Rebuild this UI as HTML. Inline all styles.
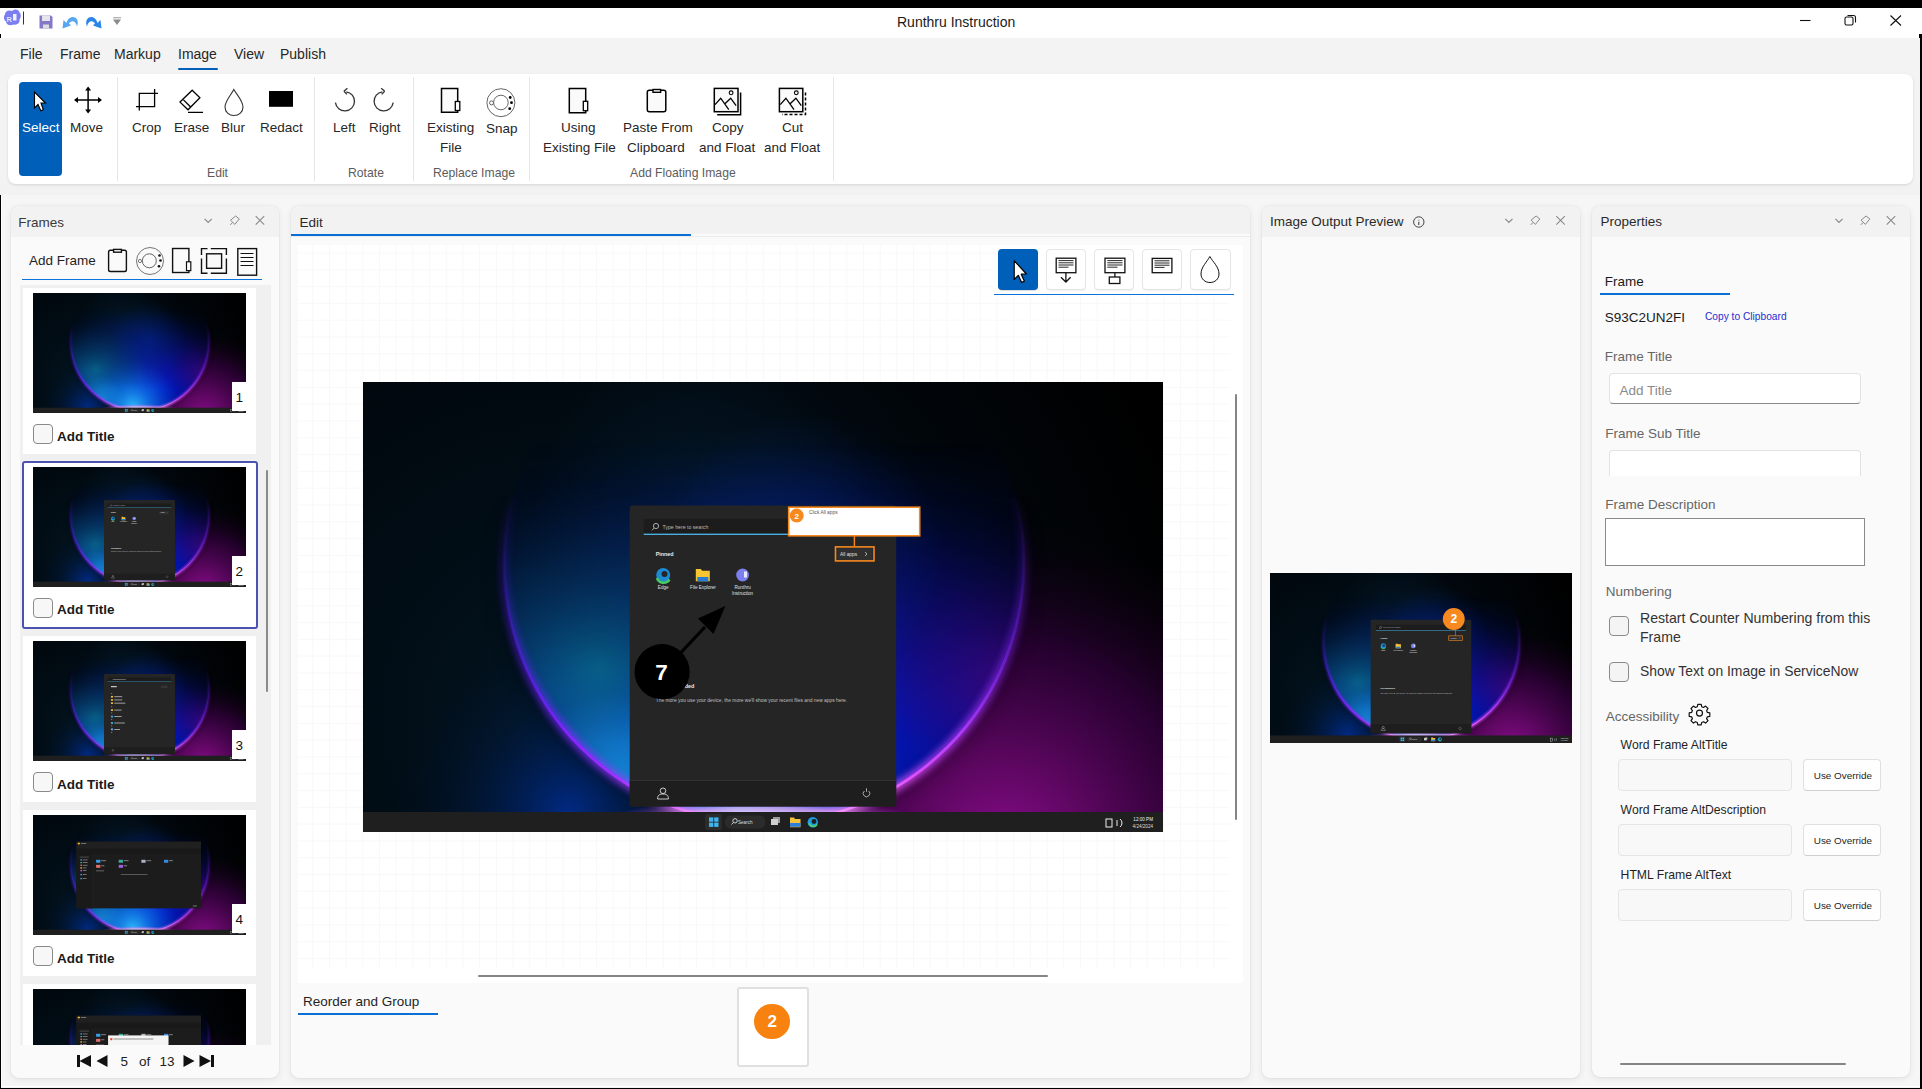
<!DOCTYPE html>
<html><head><meta charset="utf-8">
<style>
*{box-sizing:border-box;margin:0;padding:0}
html,body{width:1922px;height:1089px;overflow:hidden;background:#f3f3f3;font-family:"Liberation Sans",sans-serif;color:#1b1b1b;position:relative}
.a{position:absolute}
.t{position:absolute;white-space:nowrap;line-height:1}
svg{display:block}
.panel{position:absolute;background:#fafafa;border-radius:8px;box-shadow:0 0 1.5px rgba(0,0,0,.12),0 2px 7px rgba(0,0,0,.08);overflow:hidden}
.phead{position:absolute;left:0;top:0;right:0;height:31px;background:#f2f2f2}
.ic{position:absolute}
.lbl{position:absolute;font-size:13.5px;color:#242424;text-align:center;line-height:19px;white-space:nowrap}
.glbl{position:absolute;font-size:12.2px;color:#5c5c5c;white-space:nowrap;line-height:1}
.sep{position:absolute;top:77px;width:1px;height:104px;background:#e6e6e6}
</style></head><body>
<svg width="0" height="0" style="position:absolute;left:0;top:0"><defs>
<radialGradient id="gBase" gradientUnits="userSpaceOnUse" cx="200" cy="330" r="650">
 <stop offset="0" stop-color="#02141e"/><stop offset="0.35" stop-color="#010c14"/><stop offset="0.7" stop-color="#01060b"/><stop offset="1" stop-color="#000"/>
</radialGradient>
<radialGradient id="gMag" gradientUnits="userSpaceOnUse" cx="640" cy="470" r="330">
 <stop offset="0" stop-color="#8a0c8c"/><stop offset="0.3" stop-color="#5c0660" stop-opacity="0.95"/><stop offset="0.62" stop-color="#30003a" stop-opacity="0.8"/><stop offset="1" stop-color="#100010" stop-opacity="0"/>
</radialGradient>
<radialGradient id="gBL" gradientUnits="userSpaceOnUse" cx="205" cy="430" r="175">
 <stop offset="0" stop-color="#0034b0" stop-opacity="0.7"/><stop offset="0.6" stop-color="#002060" stop-opacity="0.25"/><stop offset="1" stop-color="#001040" stop-opacity="0"/>
</radialGradient>
<radialGradient id="gIn" gradientUnits="userSpaceOnUse" cx="400" cy="300" r="300">
 <stop offset="0" stop-color="#0a30d8"/><stop offset="0.35" stop-color="#0418c0"/><stop offset="0.7" stop-color="#020e90"/><stop offset="1" stop-color="#000840"/>
</radialGradient>
<radialGradient id="gCy" gradientUnits="userSpaceOnUse" cx="375" cy="430" r="175">
 <stop offset="0" stop-color="#30c8ff" stop-opacity="0.95"/><stop offset="0.45" stop-color="#1090f0" stop-opacity="0.55"/><stop offset="1" stop-color="#0060e0" stop-opacity="0"/>
</radialGradient>
<radialGradient id="gCy2" gradientUnits="userSpaceOnUse" cx="250" cy="400" r="90">
 <stop offset="0" stop-color="#20b8f0" stop-opacity="0.55"/><stop offset="1" stop-color="#20b0f0" stop-opacity="0"/>
</radialGradient>
<radialGradient id="gTeal" gradientUnits="userSpaceOnUse" cx="235" cy="285" r="190">
 <stop offset="0" stop-color="#0a88a8" stop-opacity="0.85"/><stop offset="0.55" stop-color="#0a6a90" stop-opacity="0.5"/><stop offset="1" stop-color="#0a6080" stop-opacity="0"/>
</radialGradient>
<radialGradient id="gTeal2" gradientUnits="userSpaceOnUse" cx="340" cy="130" r="170">
 <stop offset="0" stop-color="#0a4070" stop-opacity="0.25"/><stop offset="1" stop-color="#0a4070" stop-opacity="0"/>
</radialGradient>
<radialGradient id="gInd" gradientUnits="userSpaceOnUse" cx="640" cy="300" r="120">
 <stop offset="0" stop-color="#4a0890" stop-opacity="0.7"/><stop offset="1" stop-color="#300080" stop-opacity="0"/>
</radialGradient>
<radialGradient id="gTopB" gradientUnits="userSpaceOnUse" cx="440" cy="170" r="140">
 <stop offset="0" stop-color="#0838c8" stop-opacity="0.3"/><stop offset="1" stop-color="#0838c8" stop-opacity="0"/>
</radialGradient>
<radialGradient id="gBot" gradientUnits="userSpaceOnUse" cx="400" cy="436" r="150" gradientTransform="translate(400 436) scale(1 0.13) translate(-400 -436)">
 <stop offset="0" stop-color="#fff4ff" stop-opacity="1"/><stop offset="0.55" stop-color="#ffa0f0" stop-opacity="0.65"/><stop offset="1" stop-color="#c040ff" stop-opacity="0"/>
</radialGradient>
<linearGradient id="gInMask" gradientUnits="userSpaceOnUse" x1="0" y1="60" x2="0" y2="360">
 <stop offset="0" stop-color="#fff" stop-opacity="0"/><stop offset="0.45" stop-color="#fff" stop-opacity="0.45"/><stop offset="1" stop-color="#fff" stop-opacity="1"/>
</linearGradient>
<mask id="mIn" maskUnits="userSpaceOnUse" x="0" y="0" width="800" height="450"><rect width="800" height="450" fill="url(#gInMask)"/></mask>
<linearGradient id="gRim" gradientUnits="userSpaceOnUse" x1="140" y1="0" x2="662" y2="0">
 <stop offset="0" stop-color="#5818f8"/><stop offset="0.22" stop-color="#a030ff"/><stop offset="0.38" stop-color="#f090ff"/><stop offset="0.5" stop-color="#ffe0ff"/><stop offset="0.62" stop-color="#f8a0ff"/><stop offset="0.78" stop-color="#e050ff"/><stop offset="1" stop-color="#7020f0"/>
</linearGradient>
<linearGradient id="gRimMask" gradientUnits="userSpaceOnUse" x1="0" y1="110" x2="0" y2="350">
 <stop offset="0" stop-color="#fff" stop-opacity="0"/><stop offset="1" stop-color="#fff" stop-opacity="1"/>
</linearGradient>
<mask id="mRim" maskUnits="userSpaceOnUse" x="0" y="0" width="800" height="450"><rect width="800" height="450" fill="url(#gRimMask)"/></mask>
<clipPath id="cIn"><circle cx="401" cy="181" r="260"/></clipPath>
<filter id="fBlur" x="-20%" y="-20%" width="140%" height="140%"><feGaussianBlur stdDeviation="3.5"/></filter>
<filter id="fBlur2" x="-20%" y="-20%" width="140%" height="140%"><feGaussianBlur stdDeviation="0.7"/></filter>
<filter id="fBlur3" x="-20%" y="-20%" width="140%" height="140%"><feGaussianBlur stdDeviation="6"/></filter>
<symbol id="wall" viewBox="0 0 800 450" preserveAspectRatio="none">
 <rect width="800" height="450" fill="url(#gBase)"/>
 <rect width="800" height="450" fill="url(#gBL)"/>
 <rect width="800" height="450" fill="url(#gMag)"/>
 <rect width="800" height="450" fill="url(#gTeal2)"/>
 <g mask="url(#mRim)"><circle cx="401" cy="181" r="268" fill="none" stroke="#000" stroke-width="14" stroke-opacity="0.15" filter="url(#fBlur3)"/></g>
 <g mask="url(#mIn)"><g clip-path="url(#cIn)">
  <rect width="800" height="450" fill="url(#gIn)"/>
  <rect width="800" height="450" fill="url(#gTeal)"/>
  <rect width="800" height="450" fill="url(#gInd)"/>
  <rect width="800" height="450" fill="url(#gCy)"/>
  <rect width="800" height="450" fill="url(#gCy2)"/>
 </g></g>
 <g clip-path="url(#cIn)"><rect width="800" height="450" fill="url(#gTopB)"/></g>
 <g mask="url(#mRim)" fill="none">
  <circle cx="401" cy="181" r="260" stroke="url(#gRim)" stroke-width="9" filter="url(#fBlur)" opacity="0.75"/>
  <circle cx="401" cy="181" r="260" stroke="url(#gRim)" stroke-width="2.8" filter="url(#fBlur2)"/>
 </g>
 <rect y="400" width="800" height="40" fill="url(#gBot)"/>
 <rect y="430" width="800" height="20" fill="#1f1f1f"/>
</symbol>
</defs></svg>
<svg width="0" height="0" style="position:absolute;left:0;top:0"><defs>
<symbol id="taskicons" viewBox="0 0 800 450" preserveAspectRatio="none">
 <rect x="342" y="432" width="16.7" height="16" rx="2" fill="#2c2c2c"/>
 <rect x="346" y="435.4" width="4.3" height="4.3" fill="#3fb5f0"/><rect x="351.2" y="435.4" width="4.3" height="4.3" fill="#3fb5f0"/>
 <rect x="346" y="440.6" width="4.3" height="4.3" fill="#3fb5f0"/><rect x="351.2" y="440.6" width="4.3" height="4.3" fill="#3fb5f0"/>
 <rect x="361.7" y="433.4" width="40.8" height="13.4" rx="6.7" fill="#2b2b2b"/>
 <circle cx="372" cy="438.8" r="2.2" fill="none" stroke="#ddd" stroke-width="0.9"/>
 <path d="M370.5,440.4 L368.5,442.5" stroke="#ddd" stroke-width="0.9"/>
 <text x="375" y="441.5" font-family="Liberation Sans" font-size="4.6" fill="#ddd">Search</text>
 <rect x="410" y="435" width="7" height="6" fill="#9a9a9a"/><rect x="408" y="437" width="7" height="6" fill="#cfcfcf"/>
 <path d="M427,435.5 h4 l1,1.5 h5.5 v8.3 h-10.5 z" fill="#f6c33c"/><rect x="427" y="441" width="10.5" height="3.8" fill="#2e7fd9"/>
 <circle cx="449.8" cy="440.3" r="5.2" fill="#1f9be0"/><circle cx="451" cy="439.5" r="2.4" fill="#1f1f1f"/><path d="M446,441 a4.5,4.5 0 0 0 8,1.5" stroke="#49d46a" stroke-width="1.6" fill="none"/>
 <rect x="743" y="437" width="6" height="8" fill="none" stroke="#eee" stroke-width="1"/>
 <path d="M754,438 v6 M757,437 a5,5 0 0 1 0,8" stroke="#eee" stroke-width="1" fill="none"/>
 <text x="790" y="439" font-family="Liberation Sans" font-size="4.6" fill="#eee" text-anchor="end">12:00 PM</text>
 <text x="790" y="445.5" font-family="Liberation Sans" font-size="4.6" fill="#ddd" text-anchor="end">4/24/2024</text>
</symbol>
<symbol id="smenu" viewBox="0 0 800 450" preserveAspectRatio="none">
 <rect x="266.7" y="123.5" width="266.5" height="301" rx="3" fill="#252525"/>
 <rect x="266.7" y="398.3" width="266.5" height="26.2" fill="#1e1e1e"/>
 <rect x="266.7" y="398" width="266.5" height="0.8" fill="#353535"/>
 <rect x="280.7" y="136.7" width="238" height="16" rx="1.5" fill="#1c1c1c"/>
 <rect x="280.7" y="151.6" width="238" height="1.4" fill="#4aaee0"/>
 <circle cx="293" cy="144" r="2.6" fill="none" stroke="#bbb" stroke-width="0.9"/><path d="M291.2,146 L289,148.3" stroke="#bbb" stroke-width="0.9"/>
 <text x="299.5" y="146.5" font-family="Liberation Sans" font-size="5.2" fill="#b8b8b8">Type here to search</text>
 <text x="292.7" y="173.5" font-family="Liberation Sans" font-size="5.4" font-weight="bold" fill="#e8e8e8">Pinned</text>
 <rect x="473.5" y="166.3" width="36" height="12" rx="2" fill="#2f2f2f"/>
 <text x="477" y="174.2" font-family="Liberation Sans" font-size="4.8" fill="#e0e0e0">All apps</text><path d="M502,170 l2,2 l-2,2" stroke="#ccc" stroke-width="0.8" fill="none"/>
 <circle cx="300.2" cy="193" r="7" fill="#1b8bd6"/><path d="M294,196 a7,7 0 0 0 12.5,1.5" stroke="#48c860" stroke-width="2.6" fill="none"/><circle cx="301.5" cy="192" r="3" fill="#252525"/>
 <path d="M332.8,187 h5 l1.5,1.8 h7.5 v10.5 h-14 z" fill="#f7c531"/><rect x="334.3" y="195" width="11" height="4.4" fill="#2a7dd6"/>
 <circle cx="379.6" cy="193" r="6.4" fill="#7c80ee"/><rect x="381" y="189.5" width="3" height="6" fill="#e8e8ff"/>
 <text x="300.2" y="206.5" font-family="Liberation Sans" font-size="4.6" fill="#e0e0e0" text-anchor="middle">Edge</text>
 <text x="340" y="206.5" font-family="Liberation Sans" font-size="4.6" fill="#e0e0e0" text-anchor="middle">File Explorer</text>
 <text x="379.6" y="206.5" font-family="Liberation Sans" font-size="4.6" fill="#e0e0e0" text-anchor="middle">Runthru</text><text x="379.6" y="213" font-family="Liberation Sans" font-size="4.6" fill="#e0e0e0" text-anchor="middle">Instruction</text>
 <text x="292.7" y="306" font-family="Liberation Sans" font-size="5.4" font-weight="bold" fill="#e8e8e8">Recommended</text>
 <text x="292.7" y="320" font-family="Liberation Sans" font-size="4.9" fill="#c0c0c0">The more you use your device, the more we'll show your recent files and new apps here.</text>
 <circle cx="300" cy="408.8" r="2.8" fill="none" stroke="#ddd" stroke-width="0.9"/><path d="M294.6,417 c0,-4 2,-5 5.4,-5 c3.4,0 5.4,1 5.4,5 z" fill="none" stroke="#ddd" stroke-width="0.9"/>
 <path d="M501.3,409 a3.3,3.3 0 1 0 4.4,0 M503.5,406.3 v3.5" fill="none" stroke="#ccc" stroke-width="0.8"/>
</symbol>
<symbol id="smenu2" viewBox="0 0 800 450" preserveAspectRatio="none">
 <rect x="266.7" y="123.5" width="266.5" height="301" rx="3" fill="#252525"/>
 <rect x="266.7" y="398.3" width="266.5" height="26.2" fill="#1e1e1e"/>
 <rect x="280.7" y="136.7" width="238" height="16" rx="1.5" fill="#1c1c1c"/>
 <rect x="280.7" y="151.6" width="238" height="1.4" fill="#4aaee0"/>
 <rect x="299.5" y="143" width="49" height="2.6" fill="#8a8a8a"/>
 <rect x="292.7" y="169.2" width="22" height="4" fill="#dedede"/>
 <rect x="480" y="167" width="26" height="10" rx="2" fill="#333"/>
 <rect x="292.7" y="195" width="5" height="3" fill="#888"/>
 <rect x="292.7" y="206" width="8" height="6" fill="#f5c031"/><rect x="305" y="207.5" width="30" height="3" fill="#bbb"/>
 <rect x="292.7" y="218" width="8" height="6" fill="#f5c031"/><rect x="305" y="219.5" width="30" height="3" fill="#bbb"/>
 <rect x="292.7" y="230" width="8" height="6" fill="#f5c031"/><rect x="305" y="231.5" width="42" height="3" fill="#bbb"/>
 <rect x="292.7" y="245" width="5" height="3" fill="#888"/>
 <rect x="292.7" y="256" width="8" height="6" fill="#f5c031"/><rect x="305" y="257.5" width="28" height="3" fill="#bbb"/>
 <rect x="292.7" y="268" width="5" height="3" fill="#888"/>
 <rect x="292.7" y="280" width="8" height="7" fill="#3aa0e8"/><rect x="305" y="282" width="28" height="3" fill="#bbb"/>
 <rect x="292.7" y="293" width="5" height="3" fill="#888"/>
 <rect x="292.7" y="304" width="8" height="7" fill="#34b0d0"/><rect x="305" y="306" width="40" height="3" fill="#bbb"/>
 <rect x="292.7" y="317" width="5" height="3" fill="#888"/>
 <rect x="292.7" y="328" width="8" height="7" fill="#6aa8e8"/><rect x="305" y="330" width="22" height="3" fill="#bbb"/>
 <rect x="292.7" y="342" width="5" height="3" fill="#888"/>
 <circle cx="300" cy="410" r="3" fill="none" stroke="#ccc" stroke-width="0.9"/>
</symbol>
<symbol id="explorer" viewBox="0 0 800 450" preserveAspectRatio="none">
 <rect x="163" y="100" width="468" height="250" fill="#1c1c1c"/>
 <rect x="163" y="100" width="468" height="26" fill="#202020"/>
 <rect x="163" y="126" width="468" height="20" fill="#191919"/>
 <rect x="168" y="104" width="8" height="6" fill="#f5c031"/><rect x="180" y="105" width="20" height="3" fill="#888"/>
 <rect x="163" y="146" width="60" height="204" fill="#1a1a1a"/>
 <rect x="223" y="146" width="1" height="204" fill="#2c2c2c"/>
 <rect x="175" y="155" width="35" height="6" fill="#3a3a3a"/>
 <rect x="178" y="166" width="6" height="5" fill="#3aa0e8"/><rect x="187" y="167" width="18" height="3" fill="#888"/>
 <rect x="178" y="176" width="6" height="5" fill="#34b0a0"/><rect x="187" y="177" width="18" height="3" fill="#888"/>
 <rect x="178" y="186" width="6" height="5" fill="#e07060"/><rect x="187" y="187" width="18" height="3" fill="#888"/>
 <rect x="178" y="196" width="6" height="5" fill="#f5c031"/><rect x="187" y="197" width="14" height="3" fill="#888"/>
 <rect x="178" y="206" width="6" height="5" fill="#c060e0"/><rect x="187" y="207" width="14" height="3" fill="#888"/>
 <rect x="178" y="221" width="6" height="5" fill="#3aa0e8"/><rect x="187" y="222" width="14" height="3" fill="#888"/>
 <rect x="178" y="236" width="6" height="5" fill="#3aa0e8"/><rect x="187" y="237" width="14" height="3" fill="#888"/>
 <rect x="237" y="168" width="16" height="11" fill="#3aa0e8"/><rect x="256" y="170" width="18" height="3" fill="#999"/>
 <rect x="322" y="168" width="16" height="11" fill="#34b0a0"/><rect x="341" y="170" width="18" height="3" fill="#999"/>
 <rect x="407" y="168" width="16" height="11" fill="#aab4c8"/><rect x="426" y="170" width="18" height="3" fill="#999"/>
 <rect x="492" y="168" width="16" height="11" fill="#3a8ae0"/><rect x="511" y="170" width="14" height="3" fill="#999"/>
 <rect x="237" y="187" width="16" height="11" fill="#e07070"/><rect x="256" y="189" width="12" height="3" fill="#999"/>
 <rect x="322" y="187" width="16" height="11" fill="#a060e0"/><rect x="341" y="189" width="12" height="3" fill="#999"/>
 <rect x="237" y="208" width="30" height="3" fill="#777"/>
 <rect x="330" y="222" width="100" height="2.5" fill="#777"/>
 <rect x="600" y="338" width="16" height="6" fill="#555"/>
</symbol>
</defs></svg>




<div class="a" style="left:0;top:8px;width:1922px;height:30px;background:#fff"></div>
<!-- quick access + window controls -->
<svg class="a" style="left:0;top:8px" width="130" height="30" viewBox="0 8 130 30">
<path d="M5,14.5 C5,11 9,9.5 12,11 C14,8.5 19,9 19.5,12.5 C21.5,14 21,18 19.5,19.5 C20,23 17,25.5 13.5,24.5 C10.5,26 6,25 6,21.5 C3.5,20 3.5,16 5,14.5 Z" fill="#7a7ef0"/>
<text x="6.5" y="21.5" font-family="Liberation Sans" font-size="7.5" font-weight="bold" fill="#dfe2ff">R</text>
<rect x="13" y="14" width="3.5" height="6.5" fill="#f0f0ff"/>
<rect x="23" y="11.5" width="1" height="13" fill="#333"/>
<path d="M39.5,15.5 H51 L52.5,17 V28.5 H39.5 Z" fill="#8478c8"/>
<rect x="42" y="15.5" width="8" height="5.5" fill="#e6e6ea"/>
<rect x="43" y="24.5" width="6" height="4" fill="#ddd"/>
<path d="M66.5,23 C68,17 74,15 77,19.5 C78.5,22 77.5,25 77,26.5 C76,21.5 72,19.5 69,23.5 L71,25.5 L62.5,28.5 L63.5,20 Z" fill="#55a8f0"/>
<path d="M97.5,23 C96,17 90,15 87,19.5 C85.5,22 86.5,25 87,26.5 C88,21.5 92,19.5 95,23.5 L93,25.5 L101.5,28.5 L100.5,20 Z" fill="#2a86e6"/>
<path d="M113,17.8 H121" stroke="#999" stroke-width="1"/>
<path d="M113,19.5 L117,25 L121,19.5 Z" fill="#8a8a8a"/>
</svg>
<svg class="a" style="left:1790px;top:8px" width="120" height="30" viewBox="1790 8 120 30">
<path d="M1800,20.5 H1810.5" stroke="#111" stroke-width="1.1"/>
<rect x="1845" y="17" width="8" height="8" rx="1.5" fill="none" stroke="#111" stroke-width="1.1"/>
<path d="M1847.5,15.5 H1853.5 C1854.8,15.5 1855.5,16.2 1855.5,17.5 V22.5" fill="none" stroke="#111" stroke-width="1.1"/>
<path d="M1890.5,15.5 L1901,25.5 M1901,15.5 L1890.5,25.5" stroke="#111" stroke-width="1.1"/>
</svg>

<!-- title -->
<div class="t" style="left:897px;top:15px;font-size:14px;color:#1a1a1a">Runthru Instruction</div>

<!-- menu -->
<div class="t" style="left:20px;top:47px;font-size:14px;color:#262626">File</div>
<div class="t" style="left:60px;top:47px;font-size:14px;color:#262626">Frame</div>
<div class="t" style="left:114px;top:47px;font-size:14px;color:#262626">Markup</div>
<div class="t" style="left:178px;top:47px;font-size:14px;color:#262626">Image</div>
<div class="t" style="left:234px;top:47px;font-size:14px;color:#262626">View</div>
<div class="t" style="left:280px;top:47px;font-size:14px;color:#262626">Publish</div>
<div class="a" style="left:178px;top:68px;width:40px;height:2px;border-radius:1px;background:#005fb8"></div>


<div class="a" style="left:0;top:184px;width:1920px;height:11px;background:#f2f2f2"></div><div class="a" style="left:1px;top:195px;width:1919px;height:892px;background:#f6f6f6"></div><div class="a" style="left:1px;top:195px;width:1px;height:892px;background:#fff"></div>
<div class="a" style="left:1px;top:1086px;width:1919px;height:1px;background:#fff"></div>
<div class="panel" style="left:11px;top:205.5px;width:268px;height:872px"><div class="phead"></div></div>
<div class="t" style="left:18.2px;top:215.5px;font-size:13.5px;color:#3a3a3a">Frames</div>
<div class="t" style="left:29px;top:253.5px;font-size:13.5px;color:#1f1f1f">Add Frame</div>
<div class="a" style="left:22px;top:278.5px;width:240px;height:1.5px;background:#0a74da"></div>
<div class="a" style="left:20px;top:284.5px;width:251px;height:760px;background:#f0f0f0;overflow:hidden"><div class="a" style="left:3px;top:3.5px;width:233px;height:165.5px;background:#fff"></div><svg class="a" style="left:13px;top:8.5px" width="213" height="120" viewBox="0 0 800 450" preserveAspectRatio="none"><use href="#wall"/><use href="#taskicons"/></svg><div class="a" style="left:212px;top:97.5px;width:14px;height:29px;background:#fff"></div><div class="t" style="left:215.5px;top:106.30000000000001px;font-size:13.5px;color:#111">1</div><div class="a" style="left:13px;top:139.5px;width:20px;height:20px;border:1px solid #8a8a8a;border-radius:4px;background:#f7f7f7"></div><div class="t" style="left:37px;top:145.0px;font-size:13.5px;font-weight:bold;color:#1a1a1a">Add Title</div><div class="a" style="left:1.5px;top:176.0px;width:236px;height:168.5px;background:#fff;border:2px solid #4b52b0;border-radius:3px"></div><svg class="a" style="left:13px;top:182.2px" width="213" height="120" viewBox="0 0 800 450" preserveAspectRatio="none"><use href="#wall"/><use href="#taskicons"/><use href="#smenu"/></svg><div class="a" style="left:212px;top:271.20000000000005px;width:14px;height:29px;background:#fff"></div><div class="t" style="left:215.5px;top:280.0px;font-size:13.5px;color:#111">2</div><div class="a" style="left:13px;top:313.20000000000005px;width:20px;height:20px;border:1px solid #8a8a8a;border-radius:4px;background:#f7f7f7"></div><div class="t" style="left:37px;top:318.70000000000005px;font-size:13.5px;font-weight:bold;color:#1a1a1a">Add Title</div><div class="a" style="left:3px;top:351.5px;width:233px;height:165.5px;background:#fff"></div><svg class="a" style="left:13px;top:356.5px" width="213" height="120" viewBox="0 0 800 450" preserveAspectRatio="none"><use href="#wall"/><use href="#taskicons"/><use href="#smenu2"/></svg><div class="a" style="left:212px;top:445.5px;width:14px;height:29px;background:#fff"></div><div class="t" style="left:215.5px;top:454.29999999999995px;font-size:13.5px;color:#111">3</div><div class="a" style="left:13px;top:487.5px;width:20px;height:20px;border:1px solid #8a8a8a;border-radius:4px;background:#f7f7f7"></div><div class="t" style="left:37px;top:493.0px;font-size:13.5px;font-weight:bold;color:#1a1a1a">Add Title</div><div class="a" style="left:3px;top:525.5px;width:233px;height:165.5px;background:#fff"></div><svg class="a" style="left:13px;top:530.5px" width="213" height="120" viewBox="0 0 800 450" preserveAspectRatio="none"><use href="#wall"/><use href="#taskicons"/><use href="#explorer"/></svg><div class="a" style="left:212px;top:619.5px;width:14px;height:29px;background:#fff"></div><div class="t" style="left:215.5px;top:628.3px;font-size:13.5px;color:#111">4</div><div class="a" style="left:13px;top:661.5px;width:20px;height:20px;border:1px solid #8a8a8a;border-radius:4px;background:#f7f7f7"></div><div class="t" style="left:37px;top:667.0px;font-size:13.5px;font-weight:bold;color:#1a1a1a">Add Title</div><div class="a" style="left:3px;top:699.5px;width:233px;height:165.5px;background:#fff"></div><svg class="a" style="left:13px;top:704.5px" width="213" height="120" viewBox="0 0 800 450" preserveAspectRatio="none"><use href="#wall"/><use href="#taskicons"/><use href="#explorer"/><rect x="282" y="174" width="227" height="80" fill="#f4f4f4"/><rect x="290" y="184" width="8" height="8" fill="#e05020"/><rect x="302" y="186" width="150" height="3" fill="#777"/></svg><div class="a" style="left:212px;top:793.5px;width:14px;height:29px;background:#fff"></div><div class="t" style="left:215.5px;top:802.3px;font-size:13.5px;color:#111">5</div><div class="a" style="left:13px;top:835.5px;width:20px;height:20px;border:1px solid #8a8a8a;border-radius:4px;background:#f7f7f7"></div><div class="t" style="left:37px;top:841.0px;font-size:13.5px;font-weight:bold;color:#1a1a1a">Add Title</div></div>
<div class="a" style="left:265.5px;top:470px;width:2.5px;height:222px;background:#8a8a8a;border-radius:1px"></div>
<svg class="a" style="left:70px;top:1050px" width="150" height="22" viewBox="70 1050 150 22">
<rect x="77" y="1055" width="3" height="12" fill="#111"/><path d="M91,1055 L79.5,1061 L91,1067 Z" fill="#111"/>
<path d="M107.5,1055 L96.5,1061 L107.5,1067 Z" fill="#111"/>
<path d="M183.5,1055 L194.5,1061 L183.5,1067 Z" fill="#111"/>
<path d="M199.5,1055 L211,1061 L199.5,1067 Z" fill="#111"/><rect x="211" y="1055" width="3" height="12" fill="#111"/>
</svg>
<div class="t" style="left:120.5px;top:1055px;font-size:13.5px;color:#222">5</div>
<div class="t" style="left:139px;top:1055px;font-size:13.5px;color:#222">of</div>
<div class="t" style="left:159.5px;top:1055px;font-size:13.5px;color:#222">13</div>
<svg class="a" style="left:0;top:0;overflow:visible" width="1" height="1">
<path d="M204.60000000000002,218.9 l3.6,3.6 l3.6,-3.6" fill="none" stroke="#8a8a8a" stroke-width="1.2"/>
<path d="M230.5,220.2 L235.6,216.0 L239.4,219.0 L238.4,220.0 L234.9,224.4 Z M232.5,222.5 L230.3,224.9" fill="none" stroke="#8a8a8a" stroke-width="1" stroke-linejoin="round"/>
<path d="M255.7,216.2 l8.5,8.5 M264.2,216.2 l-8.5,8.5" fill="none" stroke="#8a8a8a" stroke-width="1.1"/>
</svg>
<svg class="a" style="left:100px;top:240px" width="165" height="40" viewBox="100 240 165 40">
<g fill="none" stroke="#111" stroke-width="1.4">
<rect x="108.6" y="250.3" width="17.8" height="21.2" rx="1.8"/>
<rect x="113.6" y="249.4" width="7.8" height="2.8" fill="#fff"/>
<circle cx="150" cy="261" r="13.5" stroke="#666" stroke-width="0.9"/>
<circle cx="149.3" cy="260.8" r="7" stroke="#555" stroke-width="0.9"/>
<circle cx="140" cy="261" r="1.6" stroke="#555" stroke-width="0.8" fill="#fff"/>
<rect x="172.6" y="248.5" width="16.3" height="24" />
<rect x="186.5" y="261.8" width="4.3" height="8.8" fill="#fff" stroke-width="1.2"/>
<path d="M201.5,255 V248.6 H207.5 M210.8,248.6 H226.4 V255 M226.4,258.5 V273.2 H210.8 M207.5,273.2 H201.5 V258.5"/>
<rect x="206.6" y="253.8" width="15" height="14.5"/>
<rect x="237.8" y="248.6" width="18.8" height="26.6"/>
<path d="M240.5,253.5 H253.5 M240.5,257.5 H253.5 M240.5,261.5 H253.5 M240.5,265.5 H253.5" stroke-width="1.2"/>
</g>
<circle cx="159.5" cy="255.5" r="1.3" fill="#111"/><circle cx="160.5" cy="260.5" r="1.3" fill="#111"/><circle cx="159" cy="266.2" r="1.3" fill="#111"/>
</svg>
<div class="panel" style="left:291px;top:206px;width:959px;height:871.5px"><div class="phead" style="height:28px"></div></div>
<div class="t" style="left:299.5px;top:215.5px;font-size:13.5px;color:#2a2a2a">Edit</div>
<div class="a" style="left:291px;top:234px;width:400px;height:2px;background:#0a6fd6"></div>
<div class="a" style="left:291px;top:236px;width:959px;height:1px;background:#ececec"></div>
<div class="a" style="left:298px;top:244.8px;width:931.5px;height:723.2px;background-color:#fff;background-image:linear-gradient(to right,#f8f8f8 1px,transparent 1px),linear-gradient(to bottom,#f8f8f8 1px,transparent 1px);background-size:16.7px 16.8px;background-position:14.3px 7.5px"></div>
<div class="a" style="left:1229.5px;top:244.8px;width:13.5px;height:738px;background:#fff"></div>
<div class="a" style="left:298px;top:968px;width:945px;height:15px;background:#fff"></div>
<div class="a" style="left:1234.8px;top:394px;width:2.4px;height:426px;background:#858585;border-radius:1px"></div>
<div class="a" style="left:477.8px;top:974.5px;width:570px;height:2.2px;background:#858585;border-radius:1px"></div>
<div class="a" style="left:994px;top:244.8px;width:249px;height:49px;background:#fff"></div>
<div class="a" style="left:993.8px;top:293.7px;width:240.4px;height:1.3px;background:#0a74da"></div>
<div class="a" style="left:998.2px;top:249px;width:39.6px;height:40.7px;background:#005fb8;border-radius:4px;box-shadow:0 1px 1px rgba(0,0,0,.15)"></div>
<div class="a" style="left:1045.6px;top:249px;width:40.8px;height:40.7px;background:#fff;border:1px solid #e6e6e6;border-radius:4px;box-shadow:0 1px 1px rgba(0,0,0,.06)"></div>
<div class="a" style="left:1093.6px;top:249px;width:40.8px;height:40.7px;background:#fff;border:1px solid #e6e6e6;border-radius:4px;box-shadow:0 1px 1px rgba(0,0,0,.06)"></div>
<div class="a" style="left:1141.7px;top:249px;width:40.8px;height:40.7px;background:#fff;border:1px solid #e6e6e6;border-radius:4px;box-shadow:0 1px 1px rgba(0,0,0,.06)"></div>
<div class="a" style="left:1189.8px;top:249px;width:40.8px;height:40.7px;background:#fff;border:1px solid #e6e6e6;border-radius:4px;box-shadow:0 1px 1px rgba(0,0,0,.06)"></div>
<svg class="a" style="left:990px;top:245px" width="250" height="45" viewBox="990 245 250 45">
<path d="M1014.2,260.6 L1014.2,279.5 L1018.3,275.3 L1021.6,282.4 L1024.4,281.2 L1021.2,274.2 L1026.4,274 Z" fill="#fff" stroke="#000" stroke-width="1.2" stroke-linejoin="round"/>
<g fill="none" stroke="#111" stroke-width="1.3">
<rect x="1056.2" y="258.2" width="19.7" height="14.5"/>
<path d="M1058.5,260.6 H1073.5 M1058.5,262.8 H1073.5 M1058.5,265 H1073.5 M1058.5,267.2 H1068.5" stroke-width="0.9"/>
<path d="M1065.9,272.7 V281.5 M1061,277.3 L1065.9,282 L1070.6,277.3"/>
<rect x="1105" y="258.2" width="19.9" height="14.5"/>
<path d="M1107.3,260.6 H1122.5 M1107.3,262.8 H1122.5 M1107.3,265 H1122.5 M1107.3,267.2 H1117.5" stroke-width="0.9"/>
<path d="M1114.9,272.7 V277"/>
<rect x="1109.3" y="277" width="10.6" height="6.5"/>
<rect x="1152.2" y="258.4" width="19.7" height="14.3"/>
<path d="M1154.5,260.8 H1169.5 M1154.5,263 H1169.5 M1154.5,265.2 H1169.5 M1154.5,267.4 H1164.5" stroke-width="0.9"/>
<path d="M1209.8,256.5 C1207,262 1201,267 1201,274 C1201,279 1205,282.5 1210,282.5 C1215,282.5 1219,279 1219,274 C1219,267 1213,262 1209.8,256.5 Z" stroke-width="1"/>
</g></svg>
<svg class="a" style="left:363px;top:382px" width="800" height="450" viewBox="0 0 800 450" preserveAspectRatio="none"><use href="#wall"/><use href="#taskicons"/><use href="#smenu"/><rect x="425.7" y="125.2" width="131" height="28.6" fill="#fff" stroke="#f7891f" stroke-width="1.6"/><circle cx="433.7" cy="133.6" r="7" fill="#f7891f"/><text x="433.7" y="136.5" font-family="Liberation Sans" font-size="8" font-weight="bold" fill="#fff" text-anchor="middle">2</text><text x="446" y="131.5" font-family="Liberation Sans" font-size="4.8" fill="#555">Click All apps</text><path d="M491.4,153.6 V164.4" stroke="#f7891f" stroke-width="1.4"/><rect x="472.5" y="164.9" width="38.5" height="14" fill="none" stroke="#f7891f" stroke-width="1.6"/><path d="M318,270.5 L342,245" stroke="#000" stroke-width="3.2"/><path d="M362.4,224 L335,236.5 L350.5,252 Z" fill="#000"/><circle cx="299.1" cy="289.7" r="27.6" fill="#000"/><text x="298.5" y="297.8" font-family="Liberation Sans" font-size="22.5" font-weight="bold" fill="#fff" text-anchor="middle">7</text></svg>
<div class="t" style="left:303px;top:994.5px;font-size:13.5px;color:#1f1f1f">Reorder and Group</div>
<div class="a" style="left:297.8px;top:1012.8px;width:140.2px;height:2px;background:#0a6fd6"></div>
<div class="a" style="left:736.5px;top:987.3px;width:72.2px;height:80px;background:#fff;border:2.6px solid #e0e0e0;border-radius:3px"></div>
<div class="a" style="left:754.2px;top:1003.6px;width:35.6px;height:35.6px;border-radius:50%;background:#f7820f"></div>
<div class="t" style="left:767.6px;top:1012.7px;font-size:17px;font-weight:bold;color:#fff">2</div>
<div class="panel" style="left:1262px;top:206px;width:318px;height:871.5px"><div class="phead"></div></div>
<div class="t" style="left:1270px;top:215px;font-size:13.5px;color:#2a2a2a">Image Output Preview</div>
<svg class="a" style="left:1410px;top:214px" width="18" height="18" viewBox="1410 214 18 18"><circle cx="1418.8" cy="222" r="5.2" fill="none" stroke="#444" stroke-width="1"/><path d="M1418.8,219.7 V220.6 M1418.8,221.7 V225" stroke="#444" stroke-width="1.1"/></svg>
<svg class="a" style="left:0;top:0;overflow:visible" width="1" height="1">
<path d="M1505.3,218.9 l3.6,3.6 l3.6,-3.6" fill="none" stroke="#8a8a8a" stroke-width="1.2"/>
<path d="M1531,220.2 L1536.1,216.0 L1539.9,219.0 L1538.9,220.0 L1535.4,224.4 Z M1533,222.5 L1530.8,224.9" fill="none" stroke="#8a8a8a" stroke-width="1" stroke-linejoin="round"/>
<path d="M1556.3,216.2 l8.5,8.5 M1564.8,216.2 l-8.5,8.5" fill="none" stroke="#8a8a8a" stroke-width="1.1"/>
</svg>
<svg class="a" style="left:1270px;top:573px" width="302" height="170" viewBox="0 0 800 450" preserveAspectRatio="none"><use href="#wall"/><use href="#taskicons"/><use href="#smenu"/><rect x="473.5" y="166.3" width="36" height="12" fill="none" stroke="#f7891f" stroke-width="1.6"/><path d="M491.4,150 V166" stroke="#f7891f" stroke-width="1.4"/><circle cx="486.8" cy="121.9" r="29" fill="#f7891f"/><text x="486.8" y="133.5" font-family="Liberation Sans" font-size="32" font-weight="bold" fill="#fff" text-anchor="middle">2</text></svg>
<div class="panel" style="left:1592px;top:205.5px;width:318px;height:871px"><div class="phead"></div></div>
<div class="t" style="left:1600.5px;top:215px;font-size:13.5px;color:#2a2a2a">Properties</div>
<svg class="a" style="left:0;top:0;overflow:visible" width="1" height="1">
<path d="M1835.3999999999999,218.9 l3.6,3.6 l3.6,-3.6" fill="none" stroke="#8a8a8a" stroke-width="1.2"/>
<path d="M1861,220.2 L1866.1,216.0 L1869.9,219.0 L1868.9,220.0 L1865.4,224.4 Z M1863,222.5 L1860.8,224.9" fill="none" stroke="#8a8a8a" stroke-width="1" stroke-linejoin="round"/>
<path d="M1886.7,216.2 l8.5,8.5 M1895.2,216.2 l-8.5,8.5" fill="none" stroke="#8a8a8a" stroke-width="1.1"/>
</svg>
<div class="t" style="left:1604.8px;top:275px;font-size:13.5px;color:#1a1a1a">Frame</div>
<div class="a" style="left:1599.7px;top:292.5px;width:130px;height:2px;background:#0a6fd6"></div>
<div class="t" style="left:1604.8px;top:310.5px;font-size:13.5px;color:#1a1a1a">S93C2UN2FI</div>
<div class="t" style="left:1705px;top:312px;font-size:10.2px;color:#1f2fd0">Copy to Clipboard</div>
<div class="t" style="left:1604.8px;top:350px;font-size:13.5px;color:#666">Frame Title</div>
<div class="a" style="left:1608.6px;top:372.7px;width:252.8px;height:31.6px;background:#fff;border:1px solid #e3e3e3;border-bottom:1px solid #8a8a8a;border-radius:4px"></div>
<div class="t" style="left:1619.5px;top:383.5px;font-size:13.5px;color:#8a8a8a">Add Title</div>
<div class="t" style="left:1605.3px;top:427px;font-size:13.5px;color:#666">Frame Sub Title</div>
<div class="a" style="left:1608.6px;top:450.4px;width:252.8px;height:25.3px;background:#fff;border:1px solid #e3e3e3;border-bottom:none;border-radius:4px 4px 0 0"></div>
<div class="t" style="left:1605.3px;top:498px;font-size:13.5px;color:#666">Frame Description</div>
<div class="a" style="left:1605.3px;top:518.4px;width:259.7px;height:47.2px;background:#fff;border:1px solid #8a8a8a"></div>
<div class="t" style="left:1605.7px;top:585px;font-size:13.5px;color:#666">Numbering</div>
<div class="a" style="left:1609.4px;top:616.4px;width:19.6px;height:19.6px;background:#f4f4f4;border:1px solid #8a8a8a;border-radius:4px"></div>
<div class="t" style="left:1640px;top:610.8px;font-size:14.1px;color:#333">Restart Counter Numbering from this</div>
<div class="t" style="left:1640px;top:629.8px;font-size:14.1px;color:#333">Frame</div>
<div class="a" style="left:1609.4px;top:662.4px;width:19.6px;height:19.6px;background:#f4f4f4;border:1px solid #8a8a8a;border-radius:4px"></div>
<div class="t" style="left:1640px;top:665px;font-size:13.9px;color:#333">Show Text on Image in ServiceNow</div>
<div class="t" style="left:1605.7px;top:710px;font-size:13.5px;color:#666">Accessibility</div>
<svg class="a" style="left:1686px;top:700px" width="28" height="26" viewBox="1686 700 28 26">
<path d="M1697.8,704.3 h3.4 l0.5,2.4 l1.8,0.8 l2.1,-1.4 l2.4,2.4 l-1.4,2.1 l0.8,1.8 l2.4,0.5 v3.4 l-2.4,0.5 l-0.8,1.8 l1.4,2.1 l-2.4,2.4 l-2.1,-1.4 l-1.8,0.8 l-0.5,2.4 h-3.4 l-0.5,-2.4 l-1.8,-0.8 l-2.1,1.4 l-2.4,-2.4 l1.4,-2.1 l-0.8,-1.8 l-2.4,-0.5 v-3.4 l2.4,-0.5 l0.8,-1.8 l-1.4,-2.1 l2.4,-2.4 l2.1,1.4 l1.8,-0.8 z" fill="none" stroke="#111" stroke-width="1.2" stroke-linejoin="round"/>
<circle cx="1699.5" cy="713.1" r="3" fill="none" stroke="#111" stroke-width="1.2"/></svg>
<div class="t" style="left:1620.6px;top:738.5px;font-size:12.2px;color:#1f1f1f">Word Frame AltTitle</div>
<div class="a" style="left:1618.3px;top:759.0px;width:173.4px;height:32.2px;background:#f8f8f8;border:1px solid #e5e5e5;border-radius:4px"></div>
<div class="a" style="left:1803.4px;top:759.0px;width:78px;height:32.2px;background:#fefefe;border:1px solid #e0e0e0;border-bottom-color:#cfcfcf;border-radius:4px"></div>
<div class="t" style="left:1813.8px;top:771.3px;font-size:9.9px;color:#1f1f1f">Use Override</div>
<div class="t" style="left:1620.6px;top:803.5px;font-size:12.2px;color:#1f1f1f">Word Frame AltDescription</div>
<div class="a" style="left:1618.3px;top:824.0px;width:173.4px;height:32.2px;background:#f8f8f8;border:1px solid #e5e5e5;border-radius:4px"></div>
<div class="a" style="left:1803.4px;top:824.0px;width:78px;height:32.2px;background:#fefefe;border:1px solid #e0e0e0;border-bottom-color:#cfcfcf;border-radius:4px"></div>
<div class="t" style="left:1813.8px;top:836.3px;font-size:9.9px;color:#1f1f1f">Use Override</div>
<div class="t" style="left:1620.6px;top:868.5px;font-size:12.2px;color:#1f1f1f">HTML Frame AltText</div>
<div class="a" style="left:1618.3px;top:889.0px;width:173.4px;height:32.2px;background:#f8f8f8;border:1px solid #e5e5e5;border-radius:4px"></div>
<div class="a" style="left:1803.4px;top:889.0px;width:78px;height:32.2px;background:#fefefe;border:1px solid #e0e0e0;border-bottom-color:#cfcfcf;border-radius:4px"></div>
<div class="t" style="left:1813.8px;top:901.3px;font-size:9.9px;color:#1f1f1f">Use Override</div>
<div class="a" style="left:1619.7px;top:1062.6px;width:226.7px;height:2.2px;background:#858585;border-radius:1px"></div>
<!-- ribbon -->
<div class="a" style="left:8px;top:74px;width:1905px;height:110px;background:#fff;border-radius:8px;box-shadow:0 1px 3px rgba(0,0,0,.12)"></div>
<div class="a" style="left:19px;top:82px;width:43px;height:94px;background:#005fb8;border-radius:4px"></div>


<!-- ribbon labels -->
<div class="t" style="left:22px;top:121px;font-size:13.5px;color:#fff">Select</div>
<div class="t" style="left:70px;top:121px;font-size:13.5px;color:#262626">Move</div>
<div class="t" style="left:132px;top:121px;font-size:13.5px;color:#262626">Crop</div>
<div class="t" style="left:174px;top:121px;font-size:13.5px;color:#262626">Erase</div>
<div class="t" style="left:221px;top:121px;font-size:13.5px;color:#262626">Blur</div>
<div class="t" style="left:260px;top:121px;font-size:13.5px;color:#262626">Redact</div>
<div class="t" style="left:333px;top:121px;font-size:13.5px;color:#262626">Left</div>
<div class="t" style="left:369px;top:121px;font-size:13.5px;color:#262626">Right</div>
<div class="t" style="left:427px;top:121px;font-size:13.5px;color:#262626">Existing</div>
<div class="t" style="left:440px;top:141px;font-size:13.5px;color:#262626">File</div>
<div class="t" style="left:486px;top:122px;font-size:13.5px;color:#262626">Snap</div>
<div class="t" style="left:561px;top:121px;font-size:13.5px;color:#262626">Using</div>
<div class="t" style="left:543px;top:141px;font-size:13.5px;color:#262626">Existing File</div>
<div class="t" style="left:623px;top:121px;font-size:13.5px;color:#262626">Paste From</div>
<div class="t" style="left:627px;top:141px;font-size:13.5px;color:#262626">Clipboard</div>
<div class="t" style="left:712px;top:121px;font-size:13.5px;color:#262626">Copy</div>
<div class="t" style="left:699px;top:141px;font-size:13.5px;color:#262626">and Float</div>
<div class="t" style="left:782px;top:121px;font-size:13.5px;color:#262626">Cut</div>
<div class="t" style="left:764px;top:141px;font-size:13.5px;color:#262626">and Float</div>
<div class="glbl" style="left:207px;top:167px">Edit</div>
<div class="glbl" style="left:348px;top:167px">Rotate</div>
<div class="glbl" style="left:433px;top:167px">Replace Image</div>
<div class="glbl" style="left:630px;top:167px">Add Floating Image</div>
<div class="sep" style="left:117px"></div>
<div class="sep" style="left:314px"></div>
<div class="sep" style="left:413px"></div>
<div class="sep" style="left:529px"></div>
<div class="sep" style="left:833px"></div>
<!-- ribbon icons -->
<svg class="a" style="left:0;top:0" width="1922" height="200" viewBox="0 0 1922 200">
<g fill="none" stroke="#000" stroke-width="1.3">
<path d="M34.5,92 L34.5,108 L38,104.5 L40.8,110.8 L43.3,109.8 L41,103 L45.5,103 Z" fill="#fff" stroke-width="1.1" stroke-linejoin="miter"/>
<path d="M88.1,89 V111 M76,99.9 H100" stroke-width="1.5"/>
<path d="M88.1,86.5 l-3,4 h6 z M88.1,113.5 l-3,-4 h6 z M74,99.9 l4,-3 v6 z M102,99.9 l-4,-3 v6 z" fill="#000" stroke="none"/>
<path d="M139.3,93.3 H154.6 V106.6 H139.3 Z M154.6,89 V93.3 H158 M136,106.6 H139.3 V110.5" fill="#fafafa"/>
<path d="M192.2,90.2 L199.9,97.7 L188,109.8 L180,102.1 Z M183.5,99.9 L190.4,106.8 M188,112.3 H203" fill="#fcfcfc"/>
<path d="M233.8,89.5 C231,95 225,101 225,107 C225,112 229,115.5 234,115.5 C239,115.5 243,112 243,107 C243,101 237,95 233.8,89.5 Z" stroke="#333" stroke-width="1.1"/>
<rect x="269" y="91" width="24" height="15.8" fill="#000" stroke="none"/>
<path d="M335.4,102.7 A9.6,9.6 0 1 0 346.3,91.8 M343.9,91.3 L347.4,88.3 M343.9,91.3 L347,94.4" stroke="#333" stroke-width="1.3"/>
<path d="M393.2,102.7 A9.6,9.6 0 1 1 382.3,91.8 M384.7,91.3 L381.2,88.3 M384.7,91.3 L381.6,94.4" stroke="#333" stroke-width="1.3"/>
<path d="M441.5,88.5 H457.7 V112.3 H441.5 Z" fill="#fafafa" stroke-width="1.5"/>
<rect x="455.3" y="101.5" width="4.5" height="9" fill="#fff" stroke-width="1.3"/>
<circle cx="500.9" cy="102.7" r="14" stroke="#555" stroke-width="0.9"/>
<circle cx="500.9" cy="102.5" r="7.3" stroke="#555" stroke-width="0.9"/>
<circle cx="491.5" cy="102.9" r="2" stroke="#555" stroke-width="0.9" fill="#fff"/>
<circle cx="510.2" cy="97.5" r="1.4" fill="#000" stroke="none"/><circle cx="511.5" cy="102.7" r="1.4" fill="#000" stroke="none"/><circle cx="509.7" cy="108.7" r="1.4" fill="#000" stroke="none"/>
<path d="M569.3,88.5 H585.7 V112.7 H569.3 Z" fill="#fafafa" stroke-width="1.5"/>
<rect x="583.3" y="101.3" width="4.4" height="9.4" fill="#fff" stroke-width="1.3"/>
<rect x="647.3" y="90.3" width="18.5" height="21.4" rx="2" fill="#fafafa" stroke-width="1.5"/>
<rect x="653" y="89.5" width="7.6" height="2.8" fill="#fff" stroke-width="1.4"/>
<rect x="714.3" y="88.4" width="23.7" height="23.3" fill="#fafafa" stroke-width="1.5"/>
<path d="M740.6,92.4 V114.8 H717.2" stroke-width="1.5"/>
<path d="M715,104.6 L720.7,98.2 L728.8,109.7 M724.4,104.3 L730.7,98.2 L736.1,105.6" stroke-width="1.3"/>
<circle cx="731.1" cy="92.8" r="1.9" stroke-width="1.1"/>
<rect x="779.4" y="88.4" width="23.4" height="23.3" fill="#fafafa" stroke-width="1.5"/>
<path d="M805.5,92.4 V114.4 H782" stroke-width="1.5" stroke-dasharray="3,2"/>
<path d="M780.2,104.6 L785.9,98.2 L794,109.7 M789.6,104.3 L795.9,98.2 L801.3,105.6" stroke-width="1.3"/>
<circle cx="796.3" cy="92.8" r="1.9" stroke-width="1.1"/>
</g>
</svg>


<!-- borders -->
<div class="a" style="left:0;top:0;width:1922px;height:8px;background:#000"></div>
<div class="a" style="left:1920px;top:34px;width:2px;height:1055px;background:#000"></div>
<div class="a" style="left:0;top:1087.5px;width:1922px;height:1.5px;background:#000"></div>
<div class="a" style="left:0;top:195px;width:1px;height:894px;background:#000"></div><div class="a" style="left:0;top:34px;width:1px;height:4px;background:#000"></div><div class="a" style="left:1919px;top:34px;width:3px;height:4px;background:#000"></div>




</body></html>
